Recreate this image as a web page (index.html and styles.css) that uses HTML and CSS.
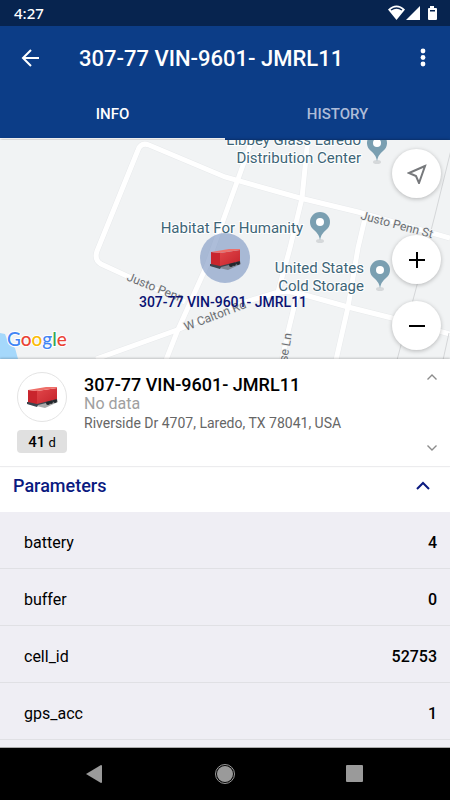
FILE: index.html
```
<!DOCTYPE html>
<html lang="en">
<head>
	<meta charset="utf-8">
	<meta name="viewport" content="width=device-width, initial-scale=1">
	<title>307-77 VIN-9601- JMRL11</title>
	<link rel="stylesheet" href="styles.css">
</head>
<body>
<div class="statusbar">
	<span class="clock">4:27</span>
	<svg class="status-icons" width="50" height="16" viewBox="0 0 50 16">
		<path d="M0 4.500 Q8.500 -3.500 17 4.500 L8.500 15 Z" fill="#fff"/>
		<path d="M3 5 Q8.500 1 14 5" fill="none" stroke="#07244f" stroke-width="1.400"/>
		<path d="M18 15 L32 1 V15 Z" fill="#fff"/>
		<path d="M42 1 h4 v2 h2 q1 0 1 1 v10 q0 1 -1 1 h-7 q-1 0 -1 -1 v-10 q0 -1 1 -1 h1 z" fill="#fff"/>
		<path d="M42 5 h5 v1.500 h-5 z" fill="#07244f"/>
	</svg>
</div>
<header class="header">
	<div class="appbar">
		<button class="icon-btn" aria-label="Back">
			<svg width="20" height="18" viewBox="0 0 20 18"><path d="M19 9 H3 M11 1 L3 9 L11 17" fill="none" stroke="#fff" stroke-width="2"/></svg>
		</button>
		<h1 class="title">307-77 VIN-9601- JMRL11</h1>
		<button class="icon-btn" aria-label="More">
			<svg width="6" height="20" viewBox="0 0 6 20" fill="#fff"><circle cx="3" cy="3" r="2.400"/><circle cx="3" cy="9.500" r="2.400"/><circle cx="3" cy="16" r="2.400"/></svg>
		</button>
	</div>
	<nav class="tabs">
		<a href="#info" class="tab active">INFO</a>
		<a href="#history" class="tab">HISTORY</a>
	</nav>
</header>
<main class="main" id="info">
	<div class="map">
		<svg class="map-svg" viewBox="0 140 450 219">
			<defs>
				<linearGradient id="red" x1="0" y1="0" x2="1" y2="1">
					<stop offset="0" stop-color="#e2474a"/>
					<stop offset="1" stop-color="#c4222b"/>
				</linearGradient>
				<g id="pin">
					<ellipse cx="0" cy="19" rx="4" ry="2" fill="#d5d8da"/>
					<path d="M0 18 Q-1 12 -6 8 A10 10 0 1 1 6 8 Q1 12 0 18 Z" fill="#7a9fb1"/>
					<circle cx="0" cy="0" r="4" fill="#fff"/>
				</g>
				<g id="trailer">
					<path d="M-14 8 L3 12 L16 6 L15 3 Z" fill="#555" opacity=".5"/>
					<path d="M-15 6 L-15 8 L-5 11 L-4 9 L4 7 L15 5 V2 L-5 6 Z" fill="#3b454f"/>
					<circle cx="6" cy="7" r="2" fill="#22272c"/>
					<circle cx="9" cy="6" r="2" fill="#22272c"/>
					<circle cx="13" cy="5" r="2" fill="#22272c"/>
					<path d="M-14 -6 L-5 -5 L-5 8 L-14 6 Z" fill="#c9252d"/>
					<path d="M-5 -5 L15 -8 V3 L-5 8 Z" fill="url(#red)"/>
					<path d="M-14 -6 L4 -9 L15 -9 L15 -8 L-5 -5 Z" fill="#ee6f69"/>
				</g>
			</defs>
			<rect x="0" y="140" width="450" height="219" fill="#f1f3f4"/>
			<path d="M0 333 L5 334 Q8 344 15 348 L18 359 H0 Z" fill="#a5d8fb"/>
			<!-- roads: grey casing first, white on top -->
			<g fill="none" stroke="#e8eaec" stroke-width="6">
				<path d="M185 302 L127 276 L101 264 Q94 260 97 251 L138 150 Q141 142 149 145 L225 177 L300 198 L358 212 L450 238"/>
				<path d="M252 140 L237 182 L207 265 L177 332 L166 360"/>
				<path d="M308 138 L302 198 L290 248 L278 292"/>
				<path d="M366 214 L358 248 L348 307 L336 360"/>
				<path d="M96 359 L177 330 L245 302 L275 293 Q288 290 305 295 L348 307 L392 318 L450 334"/>
				<path d="M297 295 L288 332 L282 360"/>
			</g>
			<g fill="none" stroke="#fff" stroke-width="5">
				<path d="M185 302 L127 276 L101 264 Q94 260 97 251 L138 150 Q141 142 149 145 L225 177 L300 198 L358 212 L450 238"/>
				<path d="M252 140 L237 182 L207 265 L177 332 L166 360"/>
				<path d="M308 138 L302 198 L290 248 L278 292"/>
				<path d="M366 214 L358 248 L348 307 L336 360"/>
				<path d="M96 359 L177 330 L245 302 L275 293 Q288 290 305 295 L348 307 L392 318 L450 334"/>
				<path d="M297 295 L288 332 L282 360"/>
			</g>
			<!-- railway -->
			<path d="M451 150 L435 215 L417 285 L397 360 M449 333 L443 360" fill="none" stroke="#d4d6d8" stroke-width="1"/>
			<g class="street">
				<text transform="translate(360 219) rotate(15)">Justo Penn St</text>
				<text transform="translate(126 280) rotate(22)">Justo Penn</text>
				<text transform="translate(186 331) rotate(-21)">W Calton Rd</text>
				<text transform="translate(287 362) rotate(-80)">se Ln</text>
			</g>
			<g class="place">
				<text x="361" y="145">Libbey Glass Laredo</text>
				<text x="361" y="163">Distribution Center</text>
				<text x="303" y="233">Habitat For Humanity</text>
				<text x="364" y="273">United States</text>
				<text x="364" y="291">Cold Storage</text>
			</g>
			<use href="#pin" x="377" y="143"/>
			<use href="#pin" x="320" y="222"/>
			<use href="#pin" x="380" y="270"/>
			<circle cx="225" cy="258" r="25" fill="#8199c4" opacity=".65"/>
			<use href="#trailer" x="225" y="258"/>
			<text class="unit-label" x="223" y="307">307-77 VIN-9601- JMRL11</text>
			<text class="google" x="7" y="346"><tspan fill="#4285f4">G</tspan><tspan fill="#ea4335">o</tspan><tspan fill="#fbbc05">o</tspan><tspan fill="#4285f4">g</tspan><tspan fill="#34a853">l</tspan><tspan fill="#ea4335">e</tspan></text>
		</svg>
		<div class="map-controls">
			<button class="fab" aria-label="Locate">
				<svg width="20" height="20" viewBox="0 0 20 20"><path d="M18 2 L2 9 L9 12 L12 19 Z" fill="none" stroke="#77797c" stroke-width="2"/></svg>
			</button>
			<div class="zoom">
				<button class="fab" aria-label="Zoom in">
					<svg width="16" height="16" viewBox="0 0 16 16"><path d="M0 8 H16 M8 0 V16" stroke="#000" stroke-width="2"/></svg>
				</button>
				<button class="fab" aria-label="Zoom out">
					<svg width="16" height="16" viewBox="0 0 16 16"><path d="M0 8 H16" stroke="#000" stroke-width="2"/></svg>
				</button>
			</div>
		</div>
	</div>
	<section class="unit">
		<div class="unit-side">
			<div class="avatar">
				<svg width="36" height="28" viewBox="-18 -13 36 28"><use href="#trailer"/></svg>
			</div>
			<div class="age"><b>41</b> d</div>
		</div>
		<div class="unit-text">
			<h2 class="unit-name">307-77 VIN-9601- JMRL11</h2>
			<p class="nodata">No data</p>
			<p class="address">Riverside Dr 4707, Laredo, TX 78041, USA</p>
		</div>
		<div class="unit-arrows">
			<button class="arrow" aria-label="Previous unit">
				<svg width="10" height="6" viewBox="0 0 10 6"><path d="M0.500 5.500 L5 1 L9.500 5.500" fill="none" stroke="#8c8c8c" stroke-width="1.400"/></svg>
			</button>
			<button class="arrow" aria-label="Next unit">
				<svg width="10" height="6" viewBox="0 0 10 6"><path d="M0.500 0.500 L5 5 L9.500 0.500" fill="none" stroke="#8c8c8c" stroke-width="1.400"/></svg>
			</button>
		</div>
	</section>
	<button class="section-head" aria-expanded="true">
		<span>Parameters</span>
		<svg width="14" height="10" viewBox="0 0 14 10"><path d="M1 8 L7 2 L13 8" fill="none" stroke="#0a1a80" stroke-width="2"/></svg>
	</button>
	<div class="params">
		<table>
			<tr><th scope="row">battery</th><td>4</td></tr>
			<tr><th scope="row">buffer</th><td>0</td></tr>
			<tr><th scope="row">cell_id</th><td>52753</td></tr>
			<tr><th scope="row">gps_acc</th><td>1</td></tr>
		</table>
	</div>
</main>
<footer class="navbar">
	<button class="nav-btn" aria-label="Back">
		<svg width="20" height="20" viewBox="0 0 20 20"><path d="M1 10 L16 1 Q17 1 17 2 V18 Q17 19 16 19 Z" fill="#9a9a9a"/></svg>
	</button>
	<button class="nav-btn" aria-label="Home">
		<svg width="20" height="20" viewBox="0 0 20 20"><circle cx="10" cy="10" r="9.500" fill="none" stroke="#9a9a9a"/><circle cx="10" cy="10" r="8" fill="#9a9a9a"/></svg>
	</button>
	<button class="nav-btn" aria-label="Recent apps">
		<svg width="20" height="20" viewBox="0 0 20 20"><rect x="1" y="1" width="17" height="17" rx="1" fill="#9a9a9a"/></svg>
	</button>
</footer>
</body>
</html>
```
FILE: styles.css
```
*{
    box-sizing: border-box;
    margin: 0;
    padding: 0;
}
body{
    display: flex;
    flex-direction: column;
    height: 100vh;
    font-family: Roboto, Arial, sans-serif;
    background: #fff;
    color: #000;
}
button{
    border: none;
    background: none;
    font-family: inherit;
    cursor: pointer;
}
a{
    text-decoration: none;
}
svg{
    display: block;
}
.statusbar{
    display: flex;
    justify-content: space-between;
    align-items: center;
    height: 26px;
    padding: 0 12px 0 14px;
    background: #07244f;
    color: #fff;
}
.clock{
    font-family: "Noto Sans", sans-serif;
    font-size: 15px;
    font-weight: 500;
}
.header{
    background: #0c3d87;
    color: #fff;
}
.appbar{
    display: flex;
    align-items: center;
    height: 64px;
    padding: 0 8px 0 11px;
}
.icon-btn{
    display: flex;
    justify-content: center;
    align-items: center;
    width: 38px;
    height: 48px;
}
.title{
    flex: 1;
    padding-left: 30px;
    font-size: 22px;
    font-weight: 500;
    white-space: nowrap;
}
.tabs{
    display: flex;
}
.tab{
    flex: 1;
    height: 50px;
    border-bottom: 2px solid #0c3d87;
    line-height: 49px;
    text-align: center;
    font-size: 15px;
    font-weight: 500;
    color: #aebcd8;
}
.tab.active{
    color: #fff;
    border-color: #fff;
}
.main{
    flex: 1;
    display: flex;
    flex-direction: column;
    min-height: 0;
}
.map{
    position: relative;
    box-shadow: 0 0 3px rgba(0, 0, 0, 0.4);
}
.map-svg{
    width: 100%;
    height: auto;
}
.street{
    font-size: 12px;
    fill: #6b6e72;
    stroke: #f1f3f4;
    stroke-width: 2px;
    paint-order: stroke;
}
.place{
    font-size: 15px;
    text-anchor: end;
    fill: #3d6577;
    stroke: #fff;
    stroke-width: 2px;
    paint-order: stroke;
}
.unit-label{
    font-size: 14px;
    font-weight: 500;
    text-anchor: middle;
    fill: #0a1272;
}
.google{
    font-family: Lato, sans-serif;
    font-size: 19px;
    font-weight: 500;
    stroke: #fff;
    stroke-width: 2px;
    paint-order: stroke;
}
.map-controls{
    position: absolute;
    top: 9px;
    right: 9px;
    bottom: 9px;
    display: flex;
    flex-direction: column;
    justify-content: space-between;
}
.zoom{
    display: flex;
    flex-direction: column;
    gap: 17px;
}
.fab{
    display: flex;
    justify-content: center;
    align-items: center;
    width: 49px;
    height: 49px;
    border-radius: 50%;
    background: #fff;
    box-shadow: 0 1px 4px rgba(0, 0, 0, 0.25);
}
.unit{
    display: flex;
    padding: 13px 13px 13px 17px;
    border-bottom: 1px solid #ececee;
    background: #fff;
    box-shadow: 0 -1px 2px rgba(0, 0, 0, 0.2);
    z-index: 1;
}
.unit-side{
    width: 50px;
}
.avatar{
    display: flex;
    justify-content: center;
    align-items: center;
    width: 50px;
    height: 50px;
    border: 1px solid #e4e4e4;
    border-radius: 50%;
}
.age{
    margin-top: 8px;
    height: 23px;
    border-radius: 4px;
    background: #e0e0e0;
    line-height: 24px;
    text-align: center;
    font-size: 13px;
}
.age b{
    font-size: 15px;
    font-weight: 500;
}
.unit-text{
    flex: 1;
    padding: 3px 0 0 17px;
}
.unit-name{
    font-size: 18px;
    line-height: 20px;
    font-weight: 500;
}
.nodata{
    font-size: 16px;
    line-height: 18px;
    color: #a0a0a0;
}
.address{
    font-size: 14px;
    line-height: 20px;
    color: #666;
}
.unit-arrows{
    display: flex;
    flex-direction: column;
    justify-content: space-between;
}
.arrow{
    padding: 2px 0;
}
.section-head{
    display: flex;
    justify-content: space-between;
    align-items: center;
    width: 100%;
    padding: 8px 20px 16px 13px;
    font-size: 18px;
    line-height: 21px;
    font-weight: 500;
    color: #0a1a80;
}
.params{
    flex: 1;
    overflow: hidden;
    background: #efeef4;
    border-bottom: 1px solid #aaa;
}
.params table{
    width: 100%;
    border-spacing: 0;
}
.params th,
.params td{
    height: 57px;
    padding-top: 4px;
    border-bottom: 1px solid #e0e0e4;
    font-size: 16px;
}
.params th{
    padding-left: 24px;
    text-align: left;
    font-weight: 400;
}
.params td{
    padding-right: 13px;
    text-align: right;
    font-weight: 500;
}
.navbar{
    display: flex;
    justify-content: center;
    align-items: center;
    height: 52px;
    background: #000;
}
.nav-btn{
    display: flex;
    justify-content: center;
    width: 130px;
}
```
